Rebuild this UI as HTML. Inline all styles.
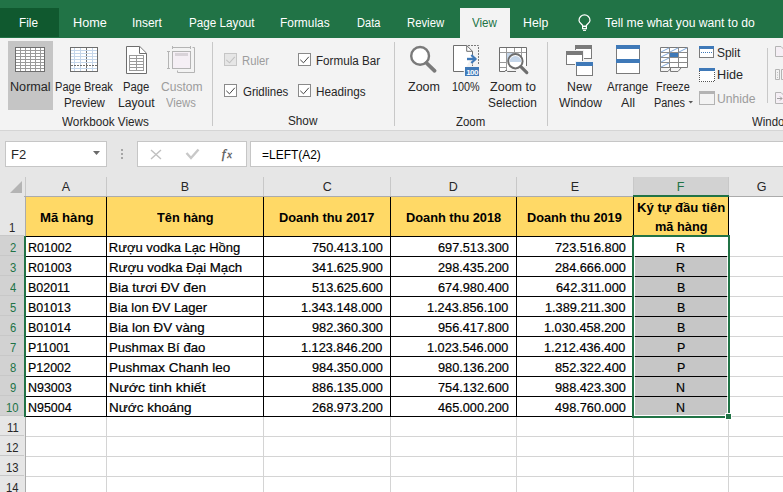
<!DOCTYPE html><html><head><meta charset="utf-8"><style>
*{box-sizing:border-box}
html,body{margin:0;padding:0}
body{width:783px;height:492px;overflow:hidden;position:relative;background:#fff;font-family:"Liberation Sans",sans-serif;}
.ab{position:absolute}
.t{position:absolute;white-space:nowrap;line-height:1;transform-origin:0 0}
svg{position:absolute;overflow:visible}
</style></head><body>
<div class="ab" style="left:0;top:0;width:783px;height:38px;background:#217346"></div>
<div class="ab" style="left:0;top:8px;width:59px;height:29px;background:#10592f"></div>
<div class="ab" style="left:460px;top:8px;width:50px;height:30px;background:#f3f3f3"></div>
<div class="t" style="left:19.46px;top:17.30px;font-size:12.5px;color:#fff;transform:scaleX(0.9421);">File</div>
<div class="t" style="left:72.59px;top:17.30px;font-size:12.5px;color:#fff;transform:scaleX(1.0125);">Home</div>
<div class="t" style="left:132.34px;top:17.30px;font-size:12.5px;color:#fff;transform:scaleX(0.9567);">Insert</div>
<div class="t" style="left:188.57px;top:17.30px;font-size:12.5px;color:#fff;transform:scaleX(0.9348);">Page Layout</div>
<div class="t" style="left:280.45px;top:17.30px;font-size:12.5px;color:#fff;transform:scaleX(0.9529);">Formulas</div>
<div class="t" style="left:356.82px;top:17.30px;font-size:12.5px;color:#fff;transform:scaleX(0.8846);">Data</div>
<div class="t" style="left:407.30px;top:17.30px;font-size:12.5px;color:#fff;transform:scaleX(0.9050);">Review</div>
<div class="t" style="left:523.02px;top:17.30px;font-size:12.5px;color:#fff;transform:scaleX(0.9840);">Help</div>
<div class="t" style="left:604.50px;top:17.30px;font-size:12.5px;color:#fff;transform:scaleX(0.9708);">Tell me what you want to do</div>
<div class="t" style="left:472.00px;top:17.30px;font-size:12.5px;color:#217346;transform:scaleX(0.9259);">View</div>
<div class="ab" style="left:0;top:38px;width:783px;height:92px;background:#f3f3f3"></div>
<div class="ab" style="left:0;top:130px;width:783px;height:1px;background:#d5d5d5"></div>
<div class="ab" style="left:8px;top:41px;width:45px;height:69px;background:#c5c5c5"></div>
<div class="t" style="left:9.65px;top:80.70px;font-size:12px;color:#262626;transform:scaleX(1.0514);">Normal</div>
<div class="t" style="left:54.68px;top:80.70px;font-size:12px;color:#262626;transform:scaleX(0.9226);">Page Break</div>
<div class="t" style="left:63.54px;top:96.60px;font-size:12px;color:#262626;transform:scaleX(0.9571);">Preview</div>
<div class="t" style="left:123.46px;top:80.70px;font-size:12px;color:#262626;transform:scaleX(0.9407);">Page</div>
<div class="t" style="left:118.39px;top:96.60px;font-size:12px;color:#262626;transform:scaleX(1.0143);">Layout</div>
<div class="t" style="left:160.50px;top:80.70px;font-size:12px;color:#9c9c9c;transform:scaleX(1.0049);">Custom</div>
<div class="t" style="left:166.00px;top:96.60px;font-size:12px;color:#9c9c9c;transform:scaleX(0.9375);">Views</div>
<div class="t" style="left:62.30px;top:115.50px;font-size:12px;color:#262626;transform:scaleX(0.9775);">Workbook Views</div>
<div class="t" style="left:241.66px;top:54.70px;font-size:12px;color:#9c9c9c;transform:scaleX(0.9393);">Ruler</div>
<div class="t" style="left:242.60px;top:85.90px;font-size:12px;color:#262626;transform:scaleX(0.9553);">Gridlines</div>
<div class="t" style="left:315.63px;top:54.70px;font-size:12px;color:#262626;transform:scaleX(0.9708);">Formula Bar</div>
<div class="t" style="left:315.62px;top:85.90px;font-size:12px;color:#262626;transform:scaleX(0.9780);">Headings</div>
<div class="t" style="left:288.42px;top:115.40px;font-size:12px;color:#262626;transform:scaleX(0.9793);">Show</div>
<div class="t" style="left:408.00px;top:80.70px;font-size:12px;color:#262626;transform:scaleX(1.0433);">Zoom</div>
<div class="t" style="left:452.10px;top:80.70px;font-size:12px;color:#262626;transform:scaleX(0.9000);">100%</div>
<div class="t" style="left:489.80px;top:80.70px;font-size:12px;color:#262626;transform:scaleX(1.0455);">Zoom to</div>
<div class="t" style="left:488.21px;top:96.50px;font-size:12px;color:#262626;transform:scaleX(0.9875);">Selection</div>
<div class="t" style="left:456.00px;top:115.50px;font-size:12px;color:#262626;transform:scaleX(0.9533);">Zoom</div>
<div class="t" style="left:567.37px;top:80.50px;font-size:12px;color:#262626;transform:scaleX(1.0261);">New</div>
<div class="t" style="left:558.50px;top:96.50px;font-size:12px;color:#262626;transform:scaleX(1.0070);">Window</div>
<div class="t" style="left:607.40px;top:80.50px;font-size:12px;color:#262626;transform:scaleX(0.9651);">Arrange</div>
<div class="t" style="left:620.80px;top:96.50px;font-size:12px;color:#262626;transform:scaleX(1.0538);">All</div>
<div class="t" style="left:656.49px;top:80.50px;font-size:12px;color:#262626;transform:scaleX(0.9056);">Freeze</div>
<div class="t" style="left:653.59px;top:96.50px;font-size:12px;color:#262626;transform:scaleX(0.9091);">Panes</div>
<div class="t" style="left:717.00px;top:46.70px;font-size:12px;color:#262626;transform:scaleX(0.9957);">Split</div>
<div class="t" style="left:716.95px;top:69.20px;font-size:12px;color:#262626;transform:scaleX(1.0542);">Hide</div>
<div class="t" style="left:717.39px;top:92.60px;font-size:12px;color:#9c9c9c;transform:scaleX(1.0135);">Unhide</div>
<div class="t" style="left:752.30px;top:116.00px;font-size:12px;color:#262626;transform:scaleX(0.9500);">Windo</div>
<div class="ab" style="left:212px;top:42px;width:1px;height:84px;background:#c8c8c8"></div>
<div class="ab" style="left:394px;top:42px;width:1px;height:84px;background:#c8c8c8"></div>
<div class="ab" style="left:547px;top:42px;width:1px;height:84px;background:#c8c8c8"></div>
<div class="ab" style="left:767px;top:48px;width:1px;height:55px;background:#c8c8c8"></div>
<div class="ab" style="left:0;top:131px;width:783px;height:46px;background:#e6e6e6"></div>
<div class="ab" style="left:5px;top:141px;width:102px;height:26px;background:#fff;border:1px solid #c6c6c6"></div>
<div class="t" style="left:11.36px;top:149.00px;font-size:12.5px;color:#262626;transform:scaleX(1.0385);">F2</div>
<div class="ab" style="left:137px;top:141px;width:110px;height:26px;background:#fff;border:1px solid #c6c6c6"></div>
<div class="ab" style="left:250px;top:141px;width:540px;height:26px;background:#fff;border:1px solid #c6c6c6"></div>
<div class="t" style="left:262.10px;top:148.90px;font-size:12.5px;color:#000;transform:scaleX(0.9574);">=LEFT(A2)</div>
<div class="ab" style="left:0;top:177px;width:783px;height:19px;background:#e6e6e6"></div>
<div class="ab" style="left:0;top:196px;width:25px;height:296px;background:#e6e6e6"></div>
<div class="ab" style="left:633px;top:177px;width:96px;height:19px;background:#d2d2d2"></div>
<div class="t" style="left:61.70px;top:181.00px;font-size:12.5px;color:#262626;">A</div>
<div class="t" style="left:180.70px;top:181.00px;font-size:12.5px;color:#262626;">B</div>
<div class="t" style="left:322.70px;top:181.00px;font-size:12.5px;color:#262626;">C</div>
<div class="t" style="left:448.70px;top:181.00px;font-size:12.5px;color:#262626;">D</div>
<div class="t" style="left:570.70px;top:181.00px;font-size:12.5px;color:#262626;">E</div>
<div class="t" style="left:676.70px;top:181.00px;font-size:12.5px;color:#217346;">F</div>
<div class="t" style="left:756.70px;top:181.00px;font-size:12.5px;color:#262626;">G</div>
<div class="ab" style="left:26px;top:196px;width:702px;height:40px;background:#ffd966"></div>
<div class="ab" style="left:25px;top:256px;width:758px;height:1px;background:#d4d4d4"></div>
<div class="ab" style="left:25px;top:276px;width:758px;height:1px;background:#d4d4d4"></div>
<div class="ab" style="left:25px;top:296px;width:758px;height:1px;background:#d4d4d4"></div>
<div class="ab" style="left:25px;top:316px;width:758px;height:1px;background:#d4d4d4"></div>
<div class="ab" style="left:25px;top:336px;width:758px;height:1px;background:#d4d4d4"></div>
<div class="ab" style="left:25px;top:356px;width:758px;height:1px;background:#d4d4d4"></div>
<div class="ab" style="left:25px;top:376px;width:758px;height:1px;background:#d4d4d4"></div>
<div class="ab" style="left:25px;top:396px;width:758px;height:1px;background:#d4d4d4"></div>
<div class="ab" style="left:25px;top:416px;width:758px;height:1px;background:#d4d4d4"></div>
<div class="ab" style="left:25px;top:436px;width:758px;height:1px;background:#d4d4d4"></div>
<div class="ab" style="left:25px;top:456px;width:758px;height:1px;background:#d4d4d4"></div>
<div class="ab" style="left:25px;top:476px;width:758px;height:1px;background:#d4d4d4"></div>
<div class="ab" style="left:25px;top:496px;width:758px;height:1px;background:#d4d4d4"></div>
<div class="ab" style="left:25px;top:516px;width:758px;height:1px;background:#d4d4d4"></div>
<div class="ab" style="left:106px;top:196px;width:1px;height:296px;background:#d4d4d4"></div>
<div class="ab" style="left:263px;top:196px;width:1px;height:296px;background:#d4d4d4"></div>
<div class="ab" style="left:390px;top:196px;width:1px;height:296px;background:#d4d4d4"></div>
<div class="ab" style="left:516px;top:196px;width:1px;height:296px;background:#d4d4d4"></div>
<div class="ab" style="left:633px;top:196px;width:1px;height:296px;background:#d4d4d4"></div>
<div class="ab" style="left:728px;top:196px;width:1px;height:296px;background:#d4d4d4"></div>
<div class="ab" style="left:635px;top:257px;width:92px;height:158px;background:#c6c6c6"></div>
<div class="ab" style="left:25px;top:196px;width:704px;height:1px;background:#000"></div>
<div class="ab" style="left:25px;top:236px;width:704px;height:1px;background:#000"></div>
<div class="ab" style="left:25px;top:256px;width:608px;height:1px;background:#000"></div>
<div class="ab" style="left:635px;top:256px;width:92px;height:1px;background:#000"></div>
<div class="ab" style="left:25px;top:276px;width:608px;height:1px;background:#000"></div>
<div class="ab" style="left:635px;top:276px;width:92px;height:1px;background:#000"></div>
<div class="ab" style="left:25px;top:296px;width:608px;height:1px;background:#000"></div>
<div class="ab" style="left:635px;top:296px;width:92px;height:1px;background:#000"></div>
<div class="ab" style="left:25px;top:316px;width:608px;height:1px;background:#000"></div>
<div class="ab" style="left:635px;top:316px;width:92px;height:1px;background:#000"></div>
<div class="ab" style="left:25px;top:336px;width:608px;height:1px;background:#000"></div>
<div class="ab" style="left:635px;top:336px;width:92px;height:1px;background:#000"></div>
<div class="ab" style="left:25px;top:356px;width:608px;height:1px;background:#000"></div>
<div class="ab" style="left:635px;top:356px;width:92px;height:1px;background:#000"></div>
<div class="ab" style="left:25px;top:376px;width:608px;height:1px;background:#000"></div>
<div class="ab" style="left:635px;top:376px;width:92px;height:1px;background:#000"></div>
<div class="ab" style="left:25px;top:396px;width:608px;height:1px;background:#000"></div>
<div class="ab" style="left:635px;top:396px;width:92px;height:1px;background:#000"></div>
<div class="ab" style="left:25px;top:416px;width:608px;height:1px;background:#000"></div>
<div class="ab" style="left:106px;top:196px;width:1px;height:221px;background:#000"></div>
<div class="ab" style="left:263px;top:196px;width:1px;height:221px;background:#000"></div>
<div class="ab" style="left:390px;top:196px;width:1px;height:221px;background:#000"></div>
<div class="ab" style="left:516px;top:196px;width:1px;height:221px;background:#000"></div>
<div class="ab" style="left:633px;top:196px;width:1px;height:221px;background:#000"></div>
<div class="ab" style="left:728px;top:196px;width:1px;height:221px;background:#000"></div>
<div class="ab" style="left:0;top:196px;width:783px;height:1px;background:#ababab"></div>
<div class="ab" style="left:25px;top:177px;width:1px;height:19px;background:#c8c8c8"></div>
<div class="ab" style="left:106px;top:177px;width:1px;height:19px;background:#c8c8c8"></div>
<div class="ab" style="left:263px;top:177px;width:1px;height:19px;background:#c8c8c8"></div>
<div class="ab" style="left:390px;top:177px;width:1px;height:19px;background:#c8c8c8"></div>
<div class="ab" style="left:516px;top:177px;width:1px;height:19px;background:#c8c8c8"></div>
<div class="ab" style="left:633px;top:177px;width:1px;height:19px;background:#c8c8c8"></div>
<div class="ab" style="left:728px;top:177px;width:1px;height:19px;background:#c8c8c8"></div>
<div class="ab" style="left:25px;top:196px;width:1px;height:296px;background:#ababab"></div>
<div class="ab" style="left:0;top:196px;width:24px;height:40px;background:#e6e6e6"></div>
<div class="ab" style="left:0;top:235px;width:24px;height:1px;background:#c8c8c8"></div>
<div class="t" style="left:9.30px;top:221.80px;font-size:12.5px;color:#262626;transform:scaleX(0.9000);">1</div>
<div class="ab" style="left:0;top:236px;width:24px;height:20px;background:#d2d2d2"></div>
<div class="ab" style="left:0;top:255px;width:24px;height:1px;background:#c8c8c8"></div>
<div class="t" style="left:9.75px;top:241.80px;font-size:12.5px;color:#217346;transform:scaleX(0.9000);">2</div>
<div class="ab" style="left:0;top:256px;width:24px;height:20px;background:#d2d2d2"></div>
<div class="ab" style="left:0;top:275px;width:24px;height:1px;background:#c8c8c8"></div>
<div class="t" style="left:9.75px;top:261.80px;font-size:12.5px;color:#217346;transform:scaleX(0.9000);">3</div>
<div class="ab" style="left:0;top:276px;width:24px;height:20px;background:#d2d2d2"></div>
<div class="ab" style="left:0;top:295px;width:24px;height:1px;background:#c8c8c8"></div>
<div class="t" style="left:9.75px;top:281.80px;font-size:12.5px;color:#217346;transform:scaleX(0.9000);">4</div>
<div class="ab" style="left:0;top:296px;width:24px;height:20px;background:#d2d2d2"></div>
<div class="ab" style="left:0;top:315px;width:24px;height:1px;background:#c8c8c8"></div>
<div class="t" style="left:9.75px;top:301.80px;font-size:12.5px;color:#217346;transform:scaleX(0.9000);">5</div>
<div class="ab" style="left:0;top:316px;width:24px;height:20px;background:#d2d2d2"></div>
<div class="ab" style="left:0;top:335px;width:24px;height:1px;background:#c8c8c8"></div>
<div class="t" style="left:9.75px;top:321.80px;font-size:12.5px;color:#217346;transform:scaleX(0.9000);">6</div>
<div class="ab" style="left:0;top:336px;width:24px;height:20px;background:#d2d2d2"></div>
<div class="ab" style="left:0;top:355px;width:24px;height:1px;background:#c8c8c8"></div>
<div class="t" style="left:9.75px;top:341.80px;font-size:12.5px;color:#217346;transform:scaleX(0.9000);">7</div>
<div class="ab" style="left:0;top:356px;width:24px;height:20px;background:#d2d2d2"></div>
<div class="ab" style="left:0;top:375px;width:24px;height:1px;background:#c8c8c8"></div>
<div class="t" style="left:9.75px;top:361.80px;font-size:12.5px;color:#217346;transform:scaleX(0.9000);">8</div>
<div class="ab" style="left:0;top:376px;width:24px;height:20px;background:#d2d2d2"></div>
<div class="ab" style="left:0;top:395px;width:24px;height:1px;background:#c8c8c8"></div>
<div class="t" style="left:9.75px;top:381.80px;font-size:12.5px;color:#217346;transform:scaleX(0.9000);">9</div>
<div class="ab" style="left:0;top:396px;width:24px;height:20px;background:#d2d2d2"></div>
<div class="ab" style="left:0;top:415px;width:24px;height:1px;background:#c8c8c8"></div>
<div class="t" style="left:6.15px;top:401.80px;font-size:12.5px;color:#217346;transform:scaleX(0.9000);">10</div>
<div class="ab" style="left:0;top:416px;width:24px;height:20px;background:#e6e6e6"></div>
<div class="ab" style="left:0;top:435px;width:24px;height:1px;background:#c8c8c8"></div>
<div class="t" style="left:6.60px;top:421.80px;font-size:12.5px;color:#262626;transform:scaleX(0.9000);">11</div>
<div class="ab" style="left:0;top:436px;width:24px;height:20px;background:#e6e6e6"></div>
<div class="ab" style="left:0;top:455px;width:24px;height:1px;background:#c8c8c8"></div>
<div class="t" style="left:6.15px;top:441.80px;font-size:12.5px;color:#262626;transform:scaleX(0.9000);">12</div>
<div class="ab" style="left:0;top:456px;width:24px;height:20px;background:#e6e6e6"></div>
<div class="ab" style="left:0;top:475px;width:24px;height:1px;background:#c8c8c8"></div>
<div class="t" style="left:6.15px;top:461.80px;font-size:12.5px;color:#262626;transform:scaleX(0.9000);">13</div>
<div class="ab" style="left:0;top:476px;width:24px;height:20px;background:#e6e6e6"></div>
<div class="ab" style="left:0;top:495px;width:24px;height:1px;background:#c8c8c8"></div>
<div class="t" style="left:6.15px;top:481.80px;font-size:12.5px;color:#262626;transform:scaleX(0.9000);">14</div>
<svg style="left:0;top:177px" width="25" height="19"><path d="M22 4 L22 16 L10 16 Z" fill="#b4b4b4"/></svg>
<div class="ab" style="left:24px;top:236px;width:2px;height:181px;background:#217346"></div>
<div class="ab" style="left:633px;top:195px;width:96px;height:2px;background:#217346"></div>
<div class="t" style="left:39.68px;top:210.60px;font-size:13px;font-weight:bold;color:#000;transform:scaleX(1.0157);">Mã hàng</div>
<div class="t" style="left:156.90px;top:210.60px;font-size:13px;font-weight:bold;color:#000;transform:scaleX(0.9807);">Tên hàng</div>
<div class="t" style="left:279.01px;top:210.60px;font-size:13px;font-weight:bold;color:#000;transform:scaleX(0.9865);">Doanh thu 2017</div>
<div class="t" style="left:405.62px;top:210.60px;font-size:13px;font-weight:bold;color:#000;transform:scaleX(0.9833);">Doanh thu 2018</div>
<div class="t" style="left:527.42px;top:210.60px;font-size:13px;font-weight:bold;color:#000;transform:scaleX(0.9792);">Doanh thu 2019</div>
<div class="t" style="left:636.69px;top:201.00px;font-size:13px;font-weight:bold;color:#000;transform:scaleX(1.0093);">Ký tự đầu tiên</div>
<div class="t" style="left:654.52px;top:220.00px;font-size:13px;font-weight:bold;color:#000;transform:scaleX(0.9827);">mã hàng</div>
<div class="t" style="left:28.24px;top:240.80px;font-size:13px;-webkit-text-stroke:0.2px currentColor;color:#000;transform:scaleX(0.9568);">R01002</div>
<div class="t" style="left:108.80px;top:240.80px;font-size:13px;-webkit-text-stroke:0.2px currentColor;color:#000;">Rượu vodka Lạc Hồng</div>
<div class="t" style="left:312.10px;top:240.80px;font-size:13px;-webkit-text-stroke:0.2px currentColor;color:#000;transform:scaleX(0.9792);">750.413.100</div>
<div class="t" style="left:438.10px;top:240.80px;font-size:13px;-webkit-text-stroke:0.2px currentColor;color:#000;transform:scaleX(0.9792);">697.513.300</div>
<div class="t" style="left:555.10px;top:240.80px;font-size:13px;-webkit-text-stroke:0.2px currentColor;color:#000;transform:scaleX(0.9792);">723.516.800</div>
<div class="t" style="left:676.22px;top:240.80px;font-size:13px;-webkit-text-stroke:0.2px currentColor;color:#000;transform:scaleX(0.9568);">R</div>
<div class="t" style="left:28.24px;top:260.80px;font-size:13px;-webkit-text-stroke:0.2px currentColor;color:#000;transform:scaleX(0.9568);">R01003</div>
<div class="t" style="left:108.78px;top:260.80px;font-size:13px;-webkit-text-stroke:0.2px currentColor;color:#000;transform:scaleX(1.0194);">Rượu vodka Đại Mạch</div>
<div class="t" style="left:312.10px;top:260.80px;font-size:13px;-webkit-text-stroke:0.2px currentColor;color:#000;transform:scaleX(0.9792);">341.625.900</div>
<div class="t" style="left:438.10px;top:260.80px;font-size:13px;-webkit-text-stroke:0.2px currentColor;color:#000;transform:scaleX(0.9792);">298.435.200</div>
<div class="t" style="left:555.10px;top:260.80px;font-size:13px;-webkit-text-stroke:0.2px currentColor;color:#000;transform:scaleX(0.9792);">284.666.000</div>
<div class="t" style="left:676.22px;top:260.80px;font-size:13px;-webkit-text-stroke:0.2px currentColor;color:#000;transform:scaleX(0.9568);">R</div>
<div class="t" style="left:28.24px;top:280.80px;font-size:13px;-webkit-text-stroke:0.2px currentColor;color:#000;transform:scaleX(0.9568);">B02011</div>
<div class="t" style="left:108.76px;top:280.80px;font-size:13px;-webkit-text-stroke:0.2px currentColor;color:#000;transform:scaleX(1.0413);">Bia tươi ĐV đen</div>
<div class="t" style="left:312.10px;top:280.80px;font-size:13px;-webkit-text-stroke:0.2px currentColor;color:#000;transform:scaleX(0.9792);">513.625.600</div>
<div class="t" style="left:438.10px;top:280.80px;font-size:13px;-webkit-text-stroke:0.2px currentColor;color:#000;transform:scaleX(0.9792);">674.980.400</div>
<div class="t" style="left:556.08px;top:280.80px;font-size:13px;-webkit-text-stroke:0.2px currentColor;color:#000;transform:scaleX(0.9792);">642.311.000</div>
<div class="t" style="left:676.69px;top:280.80px;font-size:13px;-webkit-text-stroke:0.2px currentColor;color:#000;transform:scaleX(0.9568);">B</div>
<div class="t" style="left:28.24px;top:300.80px;font-size:13px;-webkit-text-stroke:0.2px currentColor;color:#000;transform:scaleX(0.9568);">B01013</div>
<div class="t" style="left:108.80px;top:300.80px;font-size:13px;-webkit-text-stroke:0.2px currentColor;color:#000;transform:scaleX(0.9980);">Bia lon ĐV Lager</div>
<div class="t" style="left:301.33px;top:300.80px;font-size:13px;-webkit-text-stroke:0.2px currentColor;color:#000;transform:scaleX(0.9792);">1.343.148.000</div>
<div class="t" style="left:427.33px;top:300.80px;font-size:13px;-webkit-text-stroke:0.2px currentColor;color:#000;transform:scaleX(0.9792);">1.243.856.100</div>
<div class="t" style="left:545.31px;top:300.80px;font-size:13px;-webkit-text-stroke:0.2px currentColor;color:#000;transform:scaleX(0.9792);">1.389.211.300</div>
<div class="t" style="left:676.69px;top:300.80px;font-size:13px;-webkit-text-stroke:0.2px currentColor;color:#000;transform:scaleX(0.9568);">B</div>
<div class="t" style="left:28.24px;top:320.80px;font-size:13px;-webkit-text-stroke:0.2px currentColor;color:#000;transform:scaleX(0.9568);">B01014</div>
<div class="t" style="left:108.77px;top:320.80px;font-size:13px;-webkit-text-stroke:0.2px currentColor;color:#000;transform:scaleX(1.0261);">Bia lon ĐV vàng</div>
<div class="t" style="left:312.10px;top:320.80px;font-size:13px;-webkit-text-stroke:0.2px currentColor;color:#000;transform:scaleX(0.9792);">982.360.300</div>
<div class="t" style="left:438.10px;top:320.80px;font-size:13px;-webkit-text-stroke:0.2px currentColor;color:#000;transform:scaleX(0.9792);">956.417.800</div>
<div class="t" style="left:544.33px;top:320.80px;font-size:13px;-webkit-text-stroke:0.2px currentColor;color:#000;transform:scaleX(0.9792);">1.030.458.200</div>
<div class="t" style="left:676.69px;top:320.80px;font-size:13px;-webkit-text-stroke:0.2px currentColor;color:#000;transform:scaleX(0.9568);">B</div>
<div class="t" style="left:28.24px;top:340.80px;font-size:13px;-webkit-text-stroke:0.2px currentColor;color:#000;transform:scaleX(0.9568);">P11001</div>
<div class="t" style="left:108.79px;top:340.80px;font-size:13px;-webkit-text-stroke:0.2px currentColor;color:#000;transform:scaleX(1.0096);">Pushmax Bí đao</div>
<div class="t" style="left:301.33px;top:340.80px;font-size:13px;-webkit-text-stroke:0.2px currentColor;color:#000;transform:scaleX(0.9792);">1.123.846.200</div>
<div class="t" style="left:427.33px;top:340.80px;font-size:13px;-webkit-text-stroke:0.2px currentColor;color:#000;transform:scaleX(0.9792);">1.023.546.000</div>
<div class="t" style="left:544.33px;top:340.80px;font-size:13px;-webkit-text-stroke:0.2px currentColor;color:#000;transform:scaleX(0.9792);">1.212.436.400</div>
<div class="t" style="left:676.69px;top:340.80px;font-size:13px;-webkit-text-stroke:0.2px currentColor;color:#000;transform:scaleX(0.9568);">P</div>
<div class="t" style="left:28.24px;top:360.80px;font-size:13px;-webkit-text-stroke:0.2px currentColor;color:#000;transform:scaleX(0.9568);">P12002</div>
<div class="t" style="left:108.77px;top:360.80px;font-size:13px;-webkit-text-stroke:0.2px currentColor;color:#000;transform:scaleX(1.0345);">Pushmax Chanh leo</div>
<div class="t" style="left:312.10px;top:360.80px;font-size:13px;-webkit-text-stroke:0.2px currentColor;color:#000;transform:scaleX(0.9792);">984.350.000</div>
<div class="t" style="left:438.10px;top:360.80px;font-size:13px;-webkit-text-stroke:0.2px currentColor;color:#000;transform:scaleX(0.9792);">980.136.200</div>
<div class="t" style="left:555.10px;top:360.80px;font-size:13px;-webkit-text-stroke:0.2px currentColor;color:#000;transform:scaleX(0.9792);">852.322.400</div>
<div class="t" style="left:676.69px;top:360.80px;font-size:13px;-webkit-text-stroke:0.2px currentColor;color:#000;transform:scaleX(0.9568);">P</div>
<div class="t" style="left:28.24px;top:380.80px;font-size:13px;-webkit-text-stroke:0.2px currentColor;color:#000;transform:scaleX(0.9568);">N93003</div>
<div class="t" style="left:108.71px;top:380.80px;font-size:13px;-webkit-text-stroke:0.2px currentColor;color:#000;transform:scaleX(1.0886);">Nước tinh khiết</div>
<div class="t" style="left:312.10px;top:380.80px;font-size:13px;-webkit-text-stroke:0.2px currentColor;color:#000;transform:scaleX(0.9792);">886.135.000</div>
<div class="t" style="left:438.10px;top:380.80px;font-size:13px;-webkit-text-stroke:0.2px currentColor;color:#000;transform:scaleX(0.9792);">754.132.600</div>
<div class="t" style="left:555.10px;top:380.80px;font-size:13px;-webkit-text-stroke:0.2px currentColor;color:#000;transform:scaleX(0.9792);">988.423.300</div>
<div class="t" style="left:676.22px;top:380.80px;font-size:13px;-webkit-text-stroke:0.2px currentColor;color:#000;transform:scaleX(0.9568);">N</div>
<div class="t" style="left:28.24px;top:400.80px;font-size:13px;-webkit-text-stroke:0.2px currentColor;color:#000;transform:scaleX(0.9568);">N95004</div>
<div class="t" style="left:108.76px;top:400.80px;font-size:13px;-webkit-text-stroke:0.2px currentColor;color:#000;transform:scaleX(1.0385);">Nước khoáng</div>
<div class="t" style="left:312.10px;top:400.80px;font-size:13px;-webkit-text-stroke:0.2px currentColor;color:#000;transform:scaleX(0.9792);">268.973.200</div>
<div class="t" style="left:438.10px;top:400.80px;font-size:13px;-webkit-text-stroke:0.2px currentColor;color:#000;transform:scaleX(0.9792);">465.000.200</div>
<div class="t" style="left:555.10px;top:400.80px;font-size:13px;-webkit-text-stroke:0.2px currentColor;color:#000;transform:scaleX(0.9792);">498.760.000</div>
<div class="t" style="left:676.22px;top:400.80px;font-size:13px;-webkit-text-stroke:0.2px currentColor;color:#000;transform:scaleX(0.9568);">N</div>
<div class="ab" style="left:632px;top:235px;width:98px;height:183px;border:2px solid #217346"></div>
<div class="ab" style="left:725px;top:413px;width:7px;height:7px;background:#fff"></div>
<div class="ab" style="left:726px;top:414px;width:5px;height:5px;background:#217346"></div>
<svg style="left:0;top:0" width="783" height="38"><g fill="none" stroke="#fff" stroke-width="1.2"><path d="M582.6 26.3 L582.6 25.4 C581.6 23.8 579 22.4 579 20.4 A5.5 5.5 0 0 1 590 20.4 C590 22.4 587.4 23.8 586.4 25.4 L586.4 26.3 Z"/><rect x="582.6" y="26.3" width="3.8" height="2.4"/></g><rect x="583" y="29.8" width="3" height="1.1" fill="#fff"/></svg>
<svg style="left:0;top:38px" width="783" height="92" viewBox="0 38 783 92"><rect x="15.5" y="47.5" width="29" height="24" fill="#9a9a9a" stroke="#6e6e6e"/><rect x="16" y="48" width="4" height="2" fill="#fff"/><rect x="16" y="51" width="4" height="2" fill="#fff"/><rect x="16" y="54" width="4" height="2" fill="#fff"/><rect x="16" y="57" width="4" height="2" fill="#fff"/><rect x="16" y="60" width="4" height="2" fill="#fff"/><rect x="16" y="63" width="4" height="2" fill="#fff"/><rect x="16" y="66" width="4" height="2" fill="#fff"/><rect x="16" y="69" width="4" height="2" fill="#fff"/><rect x="21" y="48" width="4" height="2" fill="#fff"/><rect x="21" y="51" width="4" height="2" fill="#fff"/><rect x="21" y="54" width="4" height="2" fill="#fff"/><rect x="21" y="57" width="4" height="2" fill="#fff"/><rect x="21" y="60" width="4" height="2" fill="#fff"/><rect x="21" y="63" width="4" height="2" fill="#fff"/><rect x="21" y="66" width="4" height="2" fill="#fff"/><rect x="21" y="69" width="4" height="2" fill="#fff"/><rect x="26" y="48" width="4" height="2" fill="#fff"/><rect x="26" y="51" width="4" height="2" fill="#fff"/><rect x="26" y="54" width="4" height="2" fill="#fff"/><rect x="26" y="57" width="4" height="2" fill="#fff"/><rect x="26" y="60" width="4" height="2" fill="#fff"/><rect x="26" y="63" width="4" height="2" fill="#fff"/><rect x="26" y="66" width="4" height="2" fill="#fff"/><rect x="26" y="69" width="4" height="2" fill="#fff"/><rect x="31" y="48" width="4" height="2" fill="#fff"/><rect x="31" y="51" width="4" height="2" fill="#fff"/><rect x="31" y="54" width="4" height="2" fill="#fff"/><rect x="31" y="57" width="4" height="2" fill="#fff"/><rect x="31" y="60" width="4" height="2" fill="#fff"/><rect x="31" y="63" width="4" height="2" fill="#fff"/><rect x="31" y="66" width="4" height="2" fill="#fff"/><rect x="31" y="69" width="4" height="2" fill="#fff"/><rect x="36" y="48" width="4" height="2" fill="#fff"/><rect x="36" y="51" width="4" height="2" fill="#fff"/><rect x="36" y="54" width="4" height="2" fill="#fff"/><rect x="36" y="57" width="4" height="2" fill="#fff"/><rect x="36" y="60" width="4" height="2" fill="#fff"/><rect x="36" y="63" width="4" height="2" fill="#fff"/><rect x="36" y="66" width="4" height="2" fill="#fff"/><rect x="36" y="69" width="4" height="2" fill="#fff"/><rect x="41" y="48" width="3" height="2" fill="#fff"/><rect x="41" y="51" width="3" height="2" fill="#fff"/><rect x="41" y="54" width="3" height="2" fill="#fff"/><rect x="41" y="57" width="3" height="2" fill="#fff"/><rect x="41" y="60" width="3" height="2" fill="#fff"/><rect x="41" y="63" width="3" height="2" fill="#fff"/><rect x="41" y="66" width="3" height="2" fill="#fff"/><rect x="41" y="69" width="3" height="2" fill="#fff"/><rect x="70.5" y="47.5" width="27" height="24" fill="#fff" stroke="#6e6e6e"/><rect x="74" y="48" width="1" height="23" fill="#c5d6ea"/><rect x="80" y="48" width="1" height="23" fill="#c5d6ea"/><rect x="92" y="48" width="1" height="23" fill="#c5d6ea"/><rect x="71" y="50" width="26" height="1" fill="#c5d6ea"/><rect x="71" y="53" width="26" height="1" fill="#c5d6ea"/><rect x="71" y="56" width="26" height="1" fill="#c5d6ea"/><rect x="71" y="59" width="26" height="1" fill="#c5d6ea"/><rect x="71" y="62" width="26" height="1" fill="#c5d6ea"/><rect x="71" y="68" width="26" height="1" fill="#c5d6ea"/><line x1="86.5" y1="48" x2="86.5" y2="71" stroke="#6e6e6e" stroke-dasharray="2 1"/><line x1="71" y1="65.5" x2="97" y2="65.5" stroke="#6e6e6e" stroke-dasharray="2 1"/><path d="M126.5 46.5 H139.8 L146.5 53.2 V73.5 H126.5 Z" fill="#fff" stroke="#6e6e6e"/><path d="M139.5 47 V53.5 H146" fill="#fff" stroke="#6e6e6e"/><rect x="129.5" y="55.5" width="14" height="15" fill="#fff" stroke="#9a9a9a"/><line x1="136.5" y1="55.5" x2="136.5" y2="70.5" stroke="#9a9a9a"/><line x1="129.5" y1="58.5" x2="143.5" y2="58.5" stroke="#9a9a9a"/><line x1="129.5" y1="61.5" x2="143.5" y2="61.5" stroke="#9a9a9a"/><line x1="129.5" y1="64.5" x2="143.5" y2="64.5" stroke="#9a9a9a"/><line x1="129.5" y1="67.5" x2="143.5" y2="67.5" stroke="#9a9a9a"/><path d="M172.5 47.5 H190.5 M172.5 46 V49 M190.5 46 V49" stroke="#b4b4b4" fill="none"/><path d="M168.5 51.5 V68.5 M167 51.5 H170 M167 68.5 H170" stroke="#b4b4b4" fill="none"/><rect x="172.5" y="51.5" width="18" height="17" fill="#f5eff5" stroke="#b4b4b4"/><rect x="175" y="53" width="13" height="3" fill="#d9d3d9"/><path d="M192.5 47.5 H194.5 V72.5 H177.5 V70.5" stroke="#b4b4b4" fill="none"/><rect x="224.5" y="53.5" width="12" height="12" fill="#e6e6e6" stroke="#c6c6c6"/><path d="M226.3 59.8 L229.5 62.8 L234.8 56.8" fill="none" stroke="#c2c2c2" stroke-width="1.1"/><rect x="224.5" y="84.5" width="12" height="12" fill="#fff" stroke="#8a8a8a"/><path d="M226.3 90.8 L229.5 93.8 L234.8 87.8" fill="none" stroke="#444" stroke-width="1"/><rect x="298.5" y="53.5" width="12" height="12" fill="#fff" stroke="#8a8a8a"/><path d="M300.3 59.8 L303.5 62.8 L308.8 56.8" fill="none" stroke="#444" stroke-width="1"/><rect x="298.5" y="84.5" width="12" height="12" fill="#fff" stroke="#8a8a8a"/><path d="M300.3 90.8 L303.5 93.8 L308.8 87.8" fill="none" stroke="#444" stroke-width="1"/><circle cx="420.1" cy="55.9" r="8.9" fill="#fff" stroke="#7a7a7a" stroke-width="2.4"/><line x1="426.5" y1="63" x2="434.6" y2="70.8" stroke="#7a7a7a" stroke-width="3.8" stroke-linecap="round"/><path d="M463.8 71.5 H453.5 V45.5 H466.7 L472.5 51.3 V55" fill="#fff" stroke="#6e6e6e"/><path d="M466.7 45.5 V51.3 H472.5" fill="none" stroke="#6e6e6e"/><path d="M468 45.5 H478.5 V64.5" fill="none" stroke="#7a7a7a" stroke-dasharray="2 1"/><line x1="472.5" y1="62" x2="472.5" y2="67" stroke="#6e6e6e" stroke-dasharray="1.5 1"/><path d="M467 59 H476" stroke="#3f79b8" stroke-width="2.4"/><path d="M471.3 55 L475.5 59 L471.3 63" fill="none" stroke="#3f79b8" stroke-width="2.2"/><rect x="465" y="67" width="14" height="9" fill="#3f79b8"/><text x="472" y="74.6" font-family="Liberation Sans" font-size="8" font-weight="bold" fill="#fff" text-anchor="middle" letter-spacing="-0.6">100</text><path d="M499.5 71.5 V47.5 H526.5 V66" fill="#fff" stroke="#6e6e6e"/><path d="M499.5 71.5 H505 L506 70 L507.5 71.5 H516" fill="none" stroke="#6e6e6e"/><rect x="507" y="53" width="8" height="8" fill="#c5d6ea"/><path d="M500 52.5 H526 M506.5 48 V70 M514.5 48 V52 M521.5 48 V66 M500 62.5 H506 M500 67.5 H506" stroke="#9a9a9a" fill="none"/><circle cx="515.4" cy="61.2" r="7.2" fill="#fff" stroke="#6e6e6e" stroke-width="2"/><path d="M509.4 62 A6 6 0 0 1 521.4 62 Z" fill="#c5d6ea"/><line x1="520.8" y1="66.6" x2="526.8" y2="72.6" stroke="#6e6e6e" stroke-width="3.2" stroke-linecap="round"/><rect x="574" y="44" width="19" height="16" fill="#f3f3f3"/><rect x="575.5" y="45.5" width="16" height="13" fill="#fff" stroke="#7a7a7a"/><rect x="575" y="45" width="17" height="4" fill="#7a7a7a"/><rect x="565" y="50" width="19" height="16" fill="#f3f3f3"/><rect x="566.5" y="51.5" width="16" height="13" fill="#fff" stroke="#7a7a7a"/><rect x="566" y="51" width="17" height="4" fill="#7a7a7a"/><rect x="575" y="61" width="19" height="16" fill="#f3f3f3"/><rect x="576.5" y="62.5" width="16" height="13" fill="#fff" stroke="#7a7a7a"/><rect x="576" y="62" width="17" height="4" fill="#3f79b8"/><rect x="616.5" y="45.5" width="23" height="28" fill="#fff" stroke="#7a7a7a"/><rect x="616" y="45" width="24" height="4" fill="#3f79b8"/><rect x="616" y="59" width="24" height="4" fill="#3f79b8"/><path d="M660.5 67.5 V47.5 H687.5 V67.5 Z" fill="#fff" stroke="#7a7a7a"/><path d="M660.5 67.5 V71.5 H668 L670.5 68.5 M670.5 68 V71.5 H678 L681 68" fill="none" stroke="#7a7a7a"/><path d="M669.5 47.5 V67.5 M678.5 47.5 V67.5 M660.5 52.5 H687.5 M660.5 57.5 H687.5 M660.5 62.5 H687.5" stroke="#8a8a8a" fill="none"/><rect x="670" y="53" width="8" height="4" fill="#3f79b8"/><path d="M661 52 L669 48 M670 52 L678 48 M679 52 L687 48 M661 57 L669 53 M661 62 L669 58 M661 67 L669 63" stroke="#7fa7d9" stroke-width="1"/><rect x="699.5" y="46.5" width="14" height="11" fill="#fff" stroke="#7a7a7a"/><rect x="699" y="46" width="15" height="3" fill="#3f79b8"/><line x1="701" y1="52.5" x2="713" y2="52.5" stroke="#3f79b8" stroke-dasharray="1 1"/><rect x="699" y="68" width="16" height="14" fill="#fff"/><rect x="699" y="68" width="16" height="3" fill="#3f79b8"/><path d="M699.5 71 V82 M699 81.5 H715 M714.5 72 V82" stroke="#555" stroke-dasharray="1 1" fill="none"/><rect x="699.5" y="91.5" width="15" height="13" fill="#f3f3f3" stroke="#b3b3b3"/><rect x="699" y="91" width="16" height="3" fill="#b3b3b3"/><path d="M775.5 46.5 H781 L784 49.5 V56.5 H775.5 Z" fill="#f5eff5" stroke="#b4b4b4"/><path d="M775.5 69.5 H779.5 V79.5 H775.5 Z M781.5 69.5 H786 V79.5 H781.5 Z" fill="#f3f3f3" stroke="#b4b4b4"/><path d="M777 72.5 H778 M777 75 H778 M777 77.5 H778" stroke="#c0c0c0"/><path d="M775.5 92.5 H781 L784 95.5 V103.5 H775.5 Z" fill="#f5eff5" stroke="#b4b4b4"/><path d="M777 98.5 H782 M780 96.5 L782 98.5 L780 100.5" stroke="#a0a0a0" fill="none"/><path d="M688.5 101 H693 L690.75 103.5 Z" fill="#595959"/></svg>
<svg style="left:0;top:131px" width="783" height="46" viewBox="0 131 783 46"><path d="M93 151 H100 L96.5 155 Z" fill="#6a6a6a"/><rect x="121" y="149" width="2" height="2" fill="#a6a6a6"/><rect x="121" y="153" width="2" height="2" fill="#a6a6a6"/><rect x="121" y="157" width="2" height="2" fill="#a6a6a6"/><path d="M151 150 L161 159 M161 150 L151 159" stroke="#c0c0c0" stroke-width="1.4"/><path d="M186.5 153 L191 158 L198.5 149.5" fill="none" stroke="#c8c8c8" stroke-width="2.4"/><text x="221.8" y="157.6" font-family="Liberation Serif" font-style="italic" font-size="13.5" fill="#595959" stroke="#595959" stroke-width="0.3">f</text><text x="227.3" y="158.2" font-family="Liberation Serif" font-style="italic" font-size="10.5" fill="#595959" stroke="#595959" stroke-width="0.3">x</text></svg>
</body></html>
